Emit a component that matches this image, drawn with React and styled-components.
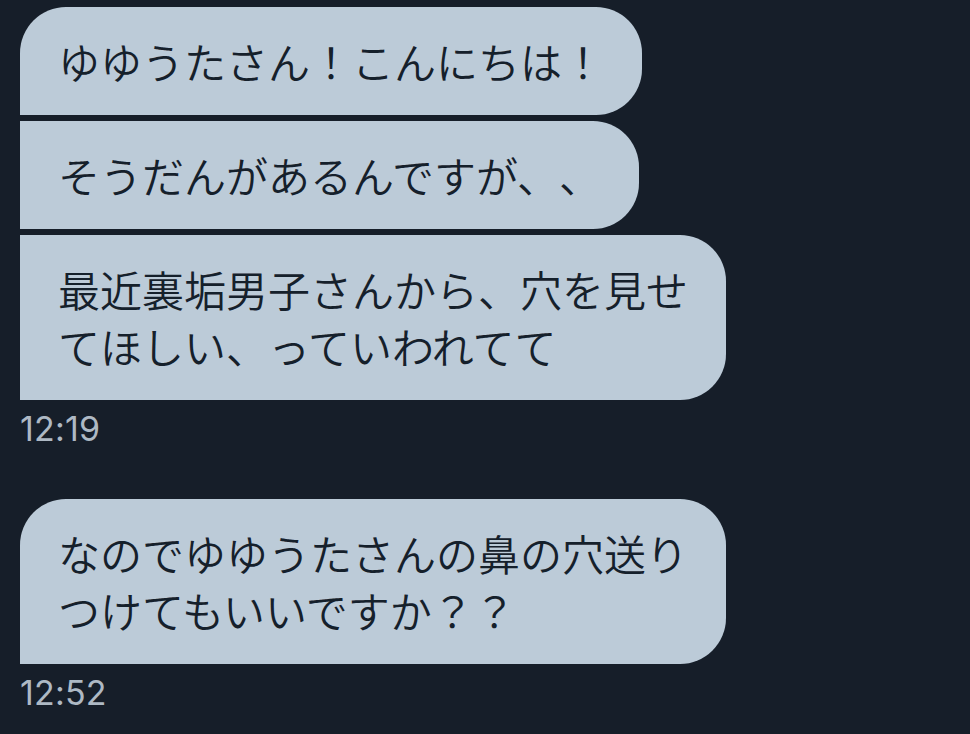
import React from "react";
import styled, { createGlobalStyle } from "styled-components";

const GlobalStyle = createGlobalStyle`
  html, body {
    margin: 0;
    padding: 0;
    background: #161e29;
  }
  body {
    font-family: "Noto Sans CJK JP", "Noto Sans", sans-serif;
  }
`;

const Page = styled.div`
  min-height: 734px;
  background: #161e29;
  padding: 7px 0 0 20px;
  box-sizing: border-box;
  display: flex;
  flex-direction: column;
  gap: 50px;
`;

const Group = styled.div`
  display: flex;
  flex-direction: column;
  align-items: flex-start;
`;

const Bubbles = styled.div`
  display: flex;
  flex-direction: column;
  align-items: flex-start;
  gap: 6px;
`;

const Bubble = styled.div`
  background: #bccbd8;
  color: #15202b;
  font-family: "Noto Sans CJK JP", sans-serif;
  font-size: 42px;
  font-weight: 350;
  line-height: 57px;
  padding: 25px 38px 26px 38px;
  border-radius: ${(p) => (p.$first ? "46px" : "0")} 46px 46px 0;
  white-space: pre-line;
  letter-spacing: 0;
  text-spacing-trim: space-all;
`;

const Timestamp = styled.div`
  margin-top: 8px;
  color: #aeb9c4;
  font-family: "Inter", "Noto Sans", sans-serif;
  font-size: 34px;
  line-height: 41px;
  letter-spacing: 0.2px;
`;

const groups = [
  {
    time: "12:19",
    messages: [
      "ゆゆうたさん！こんにちは！",
      "そうだんがあるんですが、、",
      "最近裏垢男子さんから、穴を見せ\nてほしい、っていわれてて",
    ],
  },
  {
    time: "12:52",
    messages: ["なのでゆゆうたさんの鼻の穴送り\nつけてもいいですか？？"],
  },
];

export default function App() {
  return (
    <>
      <GlobalStyle />
      <Page>
        {groups.map((g) => (
          <Group key={g.time}>
            <Bubbles>
              {g.messages.map((m, i) => (
                <Bubble key={i} $first={i === 0}>
                  {m}
                </Bubble>
              ))}
            </Bubbles>
            <Timestamp>{g.time}</Timestamp>
          </Group>
        ))}
      </Page>
    </>
  );
}
